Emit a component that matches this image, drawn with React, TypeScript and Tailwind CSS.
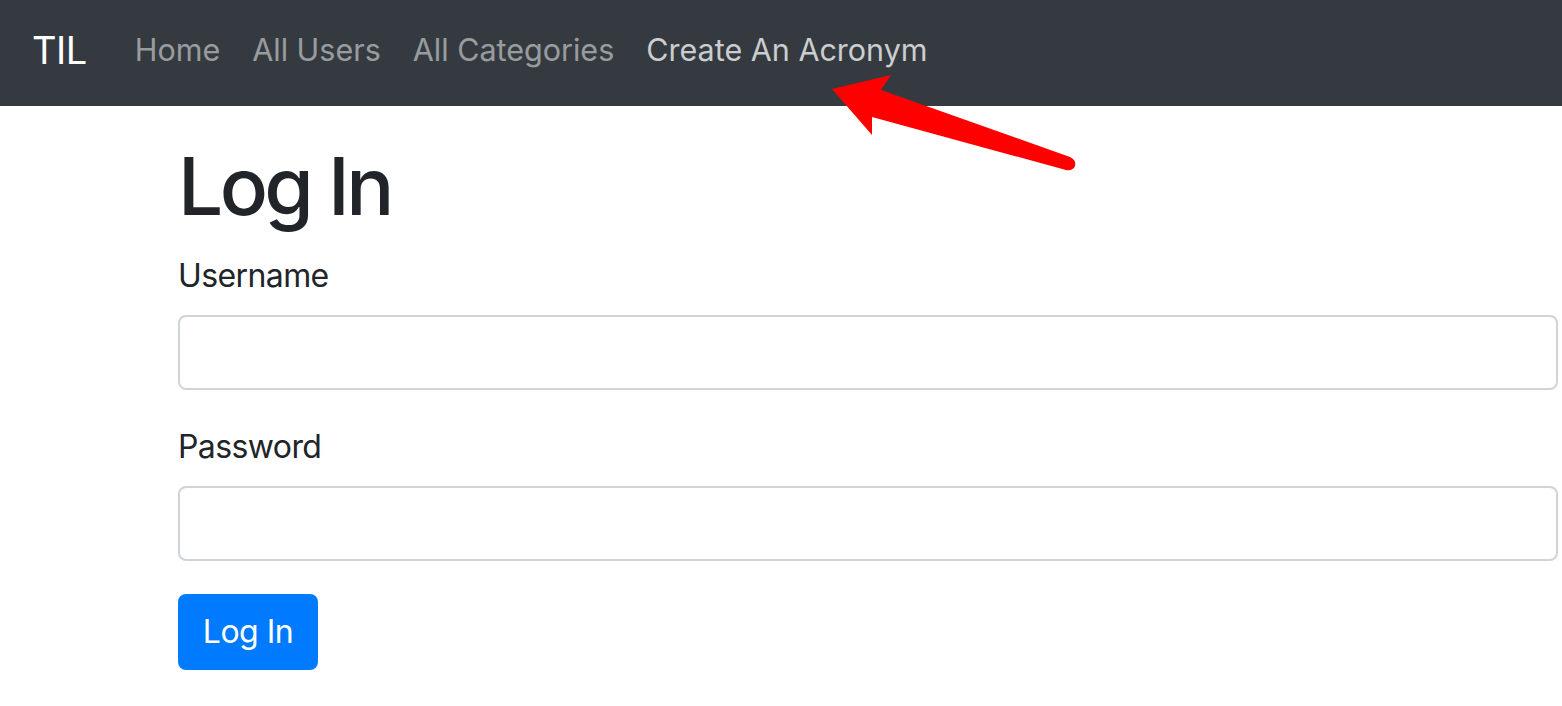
import React from 'react';

const navLinks = [
  { label: 'Home', active: false },
  { label: 'All Users', active: false },
  { label: 'All Categories', active: false },
  { label: 'Create An Acronym', active: true },
];

function Arrow() {
  return (
    <svg
      className="pointer-events-none absolute left-0 top-0"
      width="1562"
      height="706"
      viewBox="0 0 1562 706"
    >
      <path
        d="M832 89 L891 75 L881 90 L1070 157 Q1078 161 1074 168 Q1071 171 1066 170 L872 117 L872 135 Z"
        fill="#ff0000"
      />
    </svg>
  );
}

function App() {
  return (
    <div
      className="relative min-h-screen bg-white text-[#212529]"
      style={{ fontFamily: 'Inter, "Noto Sans", sans-serif' }}
    >
      <nav className="flex h-[106px] items-center bg-[#343a40] px-[32px] pb-[6px]">
        <a className="mr-[32px] text-[38px] leading-none tracking-[-0.5px] text-white">TIL</a>
        <ul className="flex items-center">
          {navLinks.map((l) => (
            <li key={l.label}>
              <a
                className={`block px-[16px] text-[30.5px] leading-[48px] ${
                  l.active ? 'text-white/75' : 'text-white/50'
                }`}
              >
                {l.label}
              </a>
            </li>
          ))}
        </ul>
      </nav>

      <main className="pl-[178px] pr-[4px]">
        <h1 className="mt-[32px] mb-[18px] text-[80px] font-medium leading-[96px] tracking-[-3.6px]">
          Log In
        </h1>
        <form onSubmit={(e) => e.preventDefault()}>
          <div className="mb-[33px]">
            <label className="mb-[15px] block text-[32px] leading-[48px] tracking-[-0.6px]">Username</label>
            <input
              type="text"
              className="block h-[75px] w-full rounded-[8px] border-2 border-[#ced4da] px-[24px] text-[32px] outline-none"
            />
          </div>
          <div className="mb-[33px]">
            <label className="mb-[15px] block text-[32px] leading-[48px] tracking-[-0.6px]">Password</label>
            <input
              type="password"
              className="block h-[75px] w-full rounded-[8px] border-2 border-[#ced4da] px-[24px] text-[32px] outline-none"
            />
          </div>
          <button
            type="submit"
            className="h-[76px] w-[140px] rounded-[8px] bg-[#007bff] text-[32px] leading-[48px] tracking-[-0.5px] text-white"
          >
            Log In
          </button>
        </form>
      </main>

      <Arrow />
    </div>
  );
}

export default App;
